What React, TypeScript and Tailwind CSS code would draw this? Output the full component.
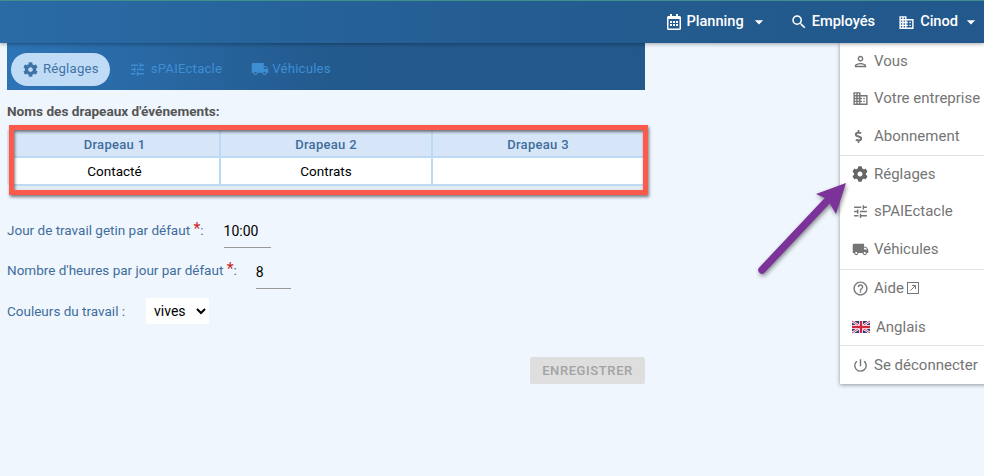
import React from "react";
import { FaCog, FaDollarSign, FaRegCalendarAlt } from "react-icons/fa";
import { MdDomain, MdSearch, MdOutlinePerson, MdTune, MdLocalShipping, MdHelpOutline, MdPowerSettingsNew, MdArrowDropDown } from "react-icons/md";

function Flag() {
  return (
    <svg width="18" height="14" viewBox="0 0 60 40" className="shrink-0">
      <rect width="60" height="40" fill="#2b3f86" />
      <path d="M0 0L60 40M60 0L0 40" stroke="#fff" strokeWidth="8" />
      <path d="M0 0L60 40M60 0L0 40" stroke="#d0283c" strokeWidth="3" />
      <path d="M30 0V40M0 20H60" stroke="#fff" strokeWidth="13" />
      <path d="M30 0V40M0 20H60" stroke="#d0283c" strokeWidth="8" />
    </svg>
  );
}

function External() {
  return (
    <svg width="12" height="12" viewBox="0 0 12 12" className="ml-[3px] text-[#777]" fill="none" stroke="currentColor" strokeWidth="1">
      <rect x="0.5" y="0.5" width="11" height="11" />
      <path d="M3.5 8.5L8.5 3.5M5 3.5H8.5V7" />
    </svg>
  );
}

function MenuItem({ icon, label, extra, h = "h-[38px]", w = "w-[22px]" }: { icon: React.ReactNode; label: string; extra?: React.ReactNode; h?: string; w?: string }) {
  return (
    <div className={`flex items-center ${h} pl-[12px] whitespace-nowrap text-[15px] text-[#757575]`}>
      <span className={`flex ${w} shrink-0 justify-start`}>{icon}</span>
      <span>{label}</span>
      {extra}
    </div>
  );
}

function Tab({ icon, label, active, gap = "gap-[5px]" }: { icon: React.ReactNode; label: string; active?: boolean; gap?: string }) {
  return (
    <div className={active
      ? `flex h-[33px] items-center ${gap} rounded-full bg-[#bfdbf6] pl-[12px] pr-[11px] text-[#3f73a5]`
      : `flex h-[33px] items-center ${gap} text-[#3f8ed4]`}>
      {icon}
      <span className="text-[13.2px] tracking-[0.2px]">{label}</span>
    </div>
  );
}

export default function App() {
  return (
    <div className="relative h-[476px] w-[984px] overflow-hidden bg-[#eff6fe] font-['Roboto',sans-serif]">
      <header className="relative z-10 flex h-[43px] items-center justify-end border-t border-[#3f8f8a] bg-gradient-to-r from-[#2a6ba6] via-[#245d92] to-[#22588b] pr-[3px] text-[14.6px] font-medium text-white shadow-[0_1px_4px_rgba(0,0,0,0.35)]">
        <FaRegCalendarAlt className="mr-[4px] text-[16px]" />
        <span>Planning</span>
        <MdArrowDropDown className="ml-[5px] text-[20px]" />
        <MdSearch className="ml-[21px] mr-[4px] text-[18px]" />
        <span>Employés</span>
        <MdDomain className="ml-[23px] mr-[5px] text-[17px]" />
        <span>Cinod</span>
        <MdArrowDropDown className="ml-[3px] text-[20px]" />
      </header>

      <main className="ml-[7px] w-[638px]">
        <nav className="flex h-[47px] items-center bg-gradient-to-r from-[#2d74b6] via-[#235a8e] to-[#22588b] pl-[4px] pt-[5px]">
          <Tab active icon={<FaCog className="text-[15px]" />} label="Réglages" />
          <div className="ml-[19px]">
            <Tab icon={<MdTune className="text-[17px]" />} label="sPAIEctacle" />
          </div>
          <div className="ml-[29px]">
            <Tab gap="gap-[3px]" icon={<MdLocalShipping className="text-[18px]" />} label="Véhicules" />
          </div>
        </nav>

        <h2 className="mt-[13px] text-[13.6px] font-bold leading-[16px] text-[#555]">Noms des drapeaux d'événements:</h2>

        <div className="relative mt-[11px] ml-[7px] w-[629px] bg-[#e1ebf4] pb-[4px]">
          <div className="absolute -left-[7px] top-0 h-[55px] w-[3px] bg-[#e2e8ee]"></div>
          <table className="w-full table-fixed border-collapse text-[13.5px]">
            <colgroup>
              <col className="w-[206px]" />
              <col className="w-[212px]" />
              <col />
            </colgroup>
            <thead>
              <tr className="h-[27px] bg-[#d6e6f8] text-[13px] tracking-[0.3px] text-[#3f6d9c]">
                <th className="border-r-2 border-b-2 border-[#bcdaf4] pr-[4px] pt-[3px] font-medium">Drapeau 1</th>
                <th className="border-r-2 border-b-2 border-[#bcdaf4] pt-[3px] font-medium">Drapeau 2</th>
                <th className="border-b-2 border-[#bcdaf4] pt-[3px] font-medium">Drapeau 3</th>
              </tr>
            </thead>
            <tbody>
              <tr className="h-[28px] bg-white text-black">
                <td className="border-r-2 border-b-2 border-[#bcdaf4] pr-[4px] text-center">Contacté</td>
                <td className="border-r-2 border-b-2 border-[#bcdaf4] text-center">Contrats</td>
                <td className="border-b-2 border-[#bcdaf4]"></td>
              </tr>
            </tbody>
          </table>
          <div className="absolute -inset-[5px] border-[5px] border-[#fc5a4c] shadow-[1px_2px_3px_rgba(0,0,0,0.5),inset_1px_2px_3px_rgba(0,0,0,0.5)]"></div>
        </div>

        <div className="mt-[25px] flex flex-col text-[13.5px] text-[#3f6d9c]">
          <div className="flex h-[40px] items-start">
            <label className="pt-[5px]">Jour de travail getin par défaut <span className="relative top-[-1px] text-[16px] leading-none text-[#c62828]">*</span>:</label>
            <input readOnly value="10:00" className="ml-[20px] h-[33px] w-[47px] border-b border-[#999] bg-transparent text-[14px] text-black outline-none" />
          </div>
          <div className="flex h-[40px] items-start">
            <label className="pt-[5px]">Nombre d'heures par jour par défaut <span className="relative top-[-1px] text-[16px] leading-none text-[#c62828]">*</span>:</label>
            <input readOnly value="8" className="ml-[19px] h-[34px] w-[35px] border-b border-[#999] bg-transparent text-[14px] text-black outline-none" />
          </div>
          <div className="mt-[3px] flex h-[26px] items-center">
            <label>Couleurs du travail :</label>
            <select className="ml-[21px] h-[26px] w-[63px] rounded-[2px] bg-white pl-[4px] text-[14px] text-black outline-none" defaultValue="vives">
              <option>vives</option>
            </select>
          </div>
        </div>

        <div className="mt-[33px] flex justify-end">
          <button className="h-[27px] w-[115px] rounded-[2px] bg-[#dedede] text-[13px] font-medium tracking-[0.6px] text-[#a3a3a3]">ENREGISTRER</button>
        </div>
      </main>

      <div className="absolute left-[840px] top-[43px] w-[150px] bg-white shadow-[0_1px_4px_rgba(0,0,0,0.4)]">
        <div>
          <MenuItem icon={<MdOutlinePerson className="text-[17px]" />} label="Vous" h="h-[36px]" />
          <MenuItem icon={<MdDomain className="text-[17px]" />} label="Votre entreprise" />
          <MenuItem icon={<FaDollarSign className="text-[13px]" />} label="Abonnement" />
        </div>
        <div className="border-t border-[#e2e2e2]">
          <MenuItem icon={<FaCog className="text-[16px] text-[#666]" />} label="Réglages" h="h-[37.5px] pb-[1.5px]" />
          <MenuItem icon={<MdTune className="text-[17px]" />} label="sPAIEctacle" h="h-[37.5px] pb-[1.5px]" />
          <MenuItem icon={<MdLocalShipping className="text-[17px]" />} label="Véhicules" h="h-[37.5px] pb-[1.5px]" />
        </div>
        <div className="border-t border-[#e2e2e2]">
          <MenuItem icon={<MdHelpOutline className="text-[17px]" />} label="Aide" extra={<External />} h="h-[37px]" />
          <MenuItem icon={<Flag />} label="Anglais" w="w-[24px]" h="h-[38px] pt-[3px]" />
        </div>
        <div className="border-t border-[#e2e2e2]">
          <MenuItem icon={<MdPowerSettingsNew className="text-[17px]" />} label="Se déconnecter" h="h-[38px] pt-[1px]" />
        </div>
      </div>

      <svg className="absolute left-[750px] top-[175px] z-20 h-[110px] w-[105px]" viewBox="0 0 105 110" fill="none" style={{ filter: "drop-shadow(1px 2px 2px rgba(0,0,0,0.45))" }}>
        <path d="M12 95L76 27" stroke="#7b3299" strokeWidth="7.5" strokeLinecap="round" />
        <path d="M96 8L66 19L77 24L86 39Z" fill="#7b3299" />
      </svg>
    </div>
  );
}
